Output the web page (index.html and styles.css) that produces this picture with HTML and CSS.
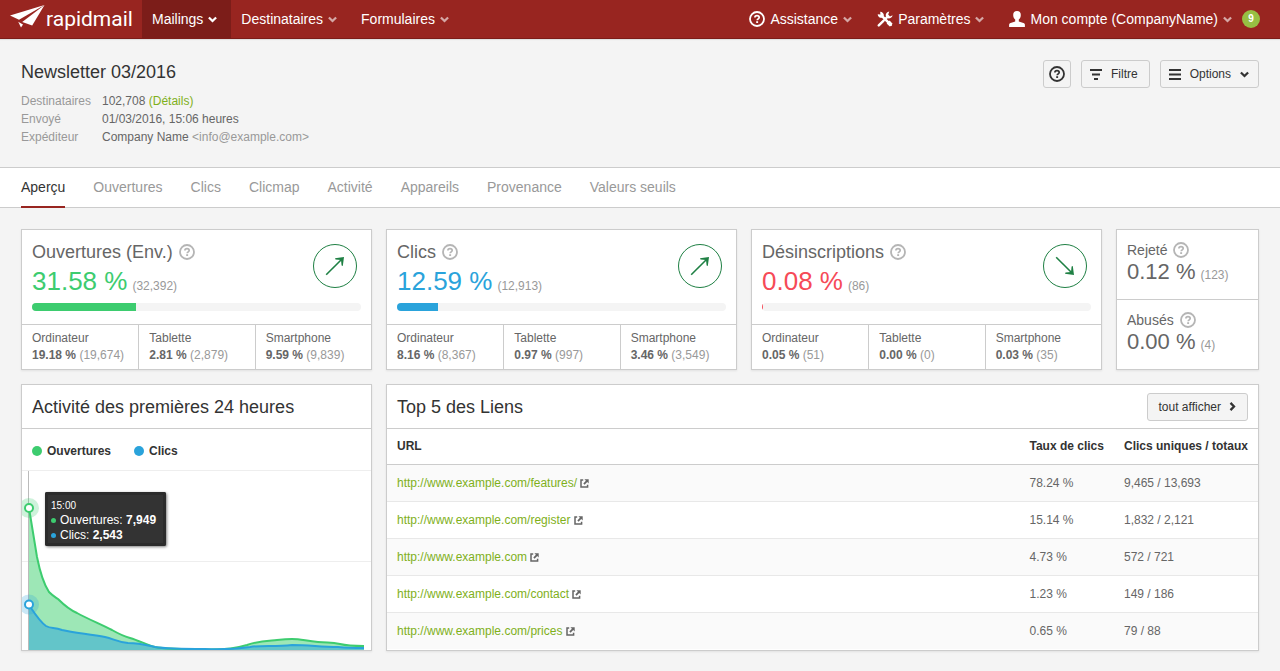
FILE: index.html
```
<!DOCTYPE html>
<html lang="fr">
<head>
    <meta charset="UTF-8">
    <meta name="viewport" content="width=device-width, initial-scale=1.0">
    <title>Newsletter 03/2016 - rapidmail</title>
    <link rel="stylesheet" href="styles.css">
</head>
<body>
<svg class="sprite" aria-hidden="true">
    <symbol id="chevron" viewBox="0 0 9 7">
        <path d="M.9 1.500 4.500 5 8.100 1.500" fill="none" stroke="currentColor" stroke-width="2.300"/>
    </symbol>
    <symbol id="help" viewBox="0 0 16 16">
        <circle cx="8" cy="8" r="7" fill="none" stroke="currentColor" stroke-width="1.8"/>
        <path d="M5.9 6.6C5.9 5.3 6.8 4.7 8 4.7s2.2.7 2.2 1.8c0 1.3-2 1.4-2 2.8" fill="none" stroke="currentColor" stroke-width="1.7"/>
        <rect x="7.2" y="10.2" width="1.9" height="1.8" fill="currentColor"/>
    </symbol>
    <symbol id="external" viewBox="0 0 9 9">
        <path d="M3.2 1H1v7h6.6V5.8" fill="none" stroke="currentColor" stroke-width="1.5"/>
        <path d="M4.4.3H8.7V4.6L7.2 3.1 4.6 5.7 3.3 4.4 5.9 1.8z" fill="currentColor"/>
    </symbol>
    <symbol id="arrow" viewBox="0 0 20 20">
        <path d="M1.2 18.8 17.500 2.500" fill="none" stroke="currentColor" stroke-width="1.600"/>
        <path d="M10 2.200 19 1 17.800 10 16.600 9.500 16 4 10.500 3.400z" fill="currentColor"/>
    </symbol>
</svg>

<header class="navbar">
    <a class="logo" href="#">
        <svg width="35" height="24" viewBox="0 0 35 24">
            <path d="M34.5 0 0 10.6l9 4.200z" fill="#fff"/>
            <path d="M34.5 0 12.2 17l10 3.600z" fill="#fff"/>
            <path d="M8.200 16.800 13 19.400 11 22.400z" fill="#fff"/>
        </svg>
        <span>rapidmail</span>
    </a>
    <nav class="nav-main">
        <a class="nav-item active" href="#">Mailings <svg class="chevron"><use href="#chevron"/></svg></a>
        <a class="nav-item" href="#">Destinataires <svg class="chevron"><use href="#chevron"/></svg></a>
        <a class="nav-item" href="#">Formulaires <svg class="chevron"><use href="#chevron"/></svg></a>
    </nav>
    <nav class="nav-user">
        <a class="nav-link" href="#">
            <svg class="nav-icon"><use href="#help"/></svg>
            Assistance <svg class="chevron"><use href="#chevron"/></svg>
        </a>
        <a class="nav-link" href="#">
            <svg class="nav-icon" viewBox="0 0 16 16">
                <path d="M4.8 4.8 13.8 13.8" stroke="#fff" stroke-width="2.6" stroke-linecap="round"/>
                <path d="M.7 3.2 3.4 3.5 3.2.7A3.6 3.6 0 0 1 6.8 4.8L4.9 6.8A3.6 3.6 0 0 1 .7 3.2z" fill="#fff"/>
                <path d="M15.6 4.2 13 5.4 11.2 3.6 12.3.6A3.8 3.8 0 0 0 8.8 5.2l2.1 2.1a3.8 3.8 0 0 0 4.7-3.1z" fill="#fff"/>
                <path d="M10.4 5.8 7.8 8.4M6.4 9.8 1.8 14.4" stroke="#fff" stroke-width="2.4" stroke-linecap="round"/>
                <path d="M9.6 12.6 12.6 9.6 15.6 12.8 12.8 15.6z" fill="#fff"/>
            </svg>
            Paramètres <svg class="chevron"><use href="#chevron"/></svg>
        </a>
        <a class="nav-link" href="#">
            <svg class="nav-icon" viewBox="0 0 16 16">
                <path d="M8 0c2.5 0 3.8 1.6 3.8 3.9 0 2-.8 3.7-2 4.7v2l4.6 1.5c1 .4 1.5 1 1.5 2V16H.1v-1.9c0-1 .5-1.6 1.5-2l4.6-1.5v-2c-1.200-1-2-2.700-2-4.700C4.200 1.600 5.500 0 8 0z" fill="#fff"/>
            </svg>
            Mon compte (CompanyName) <svg class="chevron"><use href="#chevron"/></svg>
        </a>
        <span class="badge">9</span>
    </nav>
</header>

<section class="page-header">
    <div>
        <h1>Newsletter 03/2016</h1>
        <dl class="meta">
            <dt>Destinataires</dt>
            <dd>102,708 <a href="#">(Détails)</a></dd>
            <dt>Envoyé</dt>
            <dd>01/03/2016, 15:06 heures</dd>
            <dt>Expéditeur</dt>
            <dd>Company Name <span class="muted">&lt;info@example.com&gt;</span></dd>
        </dl>
    </div>
    <div class="actions">
        <button class="btn btn-icon" aria-label="Aide"><svg width="16" height="16"><use href="#help"/></svg></button>
        <button class="btn">
            <svg width="12" height="12" viewBox="0 0 12 12"><path d="M0 2h12M2 6.500h8M4 11h4" stroke="currentColor" stroke-width="2"/></svg>
            Filtre
        </button>
        <button class="btn btn-options">
            <svg width="12" height="12" viewBox="0 0 12 12"><path d="M0 2h12M0 6.500h12M0 11h12" stroke="currentColor" stroke-width="2"/></svg>
            Options
            <svg class="chevron"><use href="#chevron"/></svg>
        </button>
    </div>
</section>

<nav class="tabs">
    <a class="active" href="#">Aperçu</a>
    <a href="#">Ouvertures</a>
    <a href="#">Clics</a>
    <a href="#">Clicmap</a>
    <a href="#">Activité</a>
    <a href="#">Appareils</a>
    <a href="#">Provenance</a>
    <a href="#">Valeurs seuils</a>
</nav>

<main class="grid">
    <section class="card">
        <div class="stat">
            <div class="stat-top">
                <div>
                    <h2>Ouvertures (Env.) <svg class="help"><use href="#help"/></svg></h2>
                    <p class="value green">31.58 % <small>(32,392)</small></p>
                </div>
                <span class="trend"><svg width="20" height="20"><use href="#arrow"/></svg></span>
            </div>
            <div class="bar"><div class="bar-fill green-bg" style="width: 31.58%"></div></div>
        </div>
        <div class="devices">
            <div>Ordinateur<br><b>19.18 %</b> <small>(19,674)</small></div>
            <div>Tablette<br><b>2.81 %</b> <small>(2,879)</small></div>
            <div>Smartphone<br><b>9.59 %</b> <small>(9,839)</small></div>
        </div>
    </section>

    <section class="card">
        <div class="stat">
            <div class="stat-top">
                <div>
                    <h2>Clics <svg class="help"><use href="#help"/></svg></h2>
                    <p class="value blue">12.59 % <small>(12,913)</small></p>
                </div>
                <span class="trend"><svg width="20" height="20"><use href="#arrow"/></svg></span>
            </div>
            <div class="bar"><div class="bar-fill blue-bg" style="width: 12.59%"></div></div>
        </div>
        <div class="devices">
            <div>Ordinateur<br><b>8.16 %</b> <small>(8,367)</small></div>
            <div>Tablette<br><b>0.97 %</b> <small>(997)</small></div>
            <div>Smartphone<br><b>3.46 %</b> <small>(3,549)</small></div>
        </div>
    </section>

    <section class="card">
        <div class="stat">
            <div class="stat-top">
                <div>
                    <h2>Désinscriptions <svg class="help"><use href="#help"/></svg></h2>
                    <p class="value red">0.08 % <small>(86)</small></p>
                </div>
                <span class="trend down"><svg width="20" height="20"><use href="#arrow"/></svg></span>
            </div>
            <div class="bar"><div class="bar-fill red-bg" style="width: 0.08%"></div></div>
        </div>
        <div class="devices">
            <div>Ordinateur<br><b>0.05 %</b> <small>(51)</small></div>
            <div>Tablette<br><b>0.00 %</b> <small>(0)</small></div>
            <div>Smartphone<br><b>0.03 %</b> <small>(35)</small></div>
        </div>
    </section>

    <section class="card side">
        <div class="side-stat">
            <h3>Rejeté <svg class="help"><use href="#help"/></svg></h3>
            <p>0.12 % <small>(123)</small></p>
        </div>
        <div class="side-stat">
            <h3>Abusés <svg class="help"><use href="#help"/></svg></h3>
            <p>0.00 % <small>(4)</small></p>
        </div>
    </section>

    <section class="card">
        <div class="card-header"><h2>Activité des premières 24 heures</h2></div>
        <div class="legend">
            <span><i class="dot green-bg"></i>Ouvertures</span>
            <span><i class="dot blue-bg"></i>Clics</span>
        </div>
        <div class="chart">
            <svg viewBox="0 0 349 179" preserveAspectRatio="none">
                <path d="M0 90.500H349" stroke="#eee"/>
                <path d="M6.500 0V179" stroke="#bbb"/>
                <path d="M7 37C10 55 13 73 15 86 18 101 21 112 27 121 31 125 33 126 36 128 42 134 48 139 55 142 64 147 78 153 90 159 97 163 101 165 108 167 118 170 125 174 133 176 142 178 155 178 183 178.500 202 179 212 178 225 174 236 170 244 170 255 169 264 168 266 168 270 168 279 168 284 170 296 171 307 172 309 171 318 173 326 175 333 175 342 175V179H7z" fill="#3c6" fill-opacity=".48"/>
                <path d="M7 134C13 143 18 151 24 155 29 158 32 156 40 159 52 162 68 163 83 166 92 168 95 171 106 172 118 172 124 174 133 176 145 178 160 178 183 178 205 179 214 178 228 176 240 174 252 176 270 174 288 174 298 176 316 176 326 177 334 177 342 177V179H7z" fill="#2aa3db" fill-opacity=".5"/>
                <path d="M7 37C10 55 13 73 15 86 18 101 21 112 27 121 31 125 33 126 36 128 42 134 48 139 55 142 64 147 78 153 90 159 97 163 101 165 108 167 118 170 125 174 133 176 142 178 155 178 183 178.500 202 179 212 178 225 174 236 170 244 170 255 169 264 168 266 168 270 168 279 168 284 170 296 171 307 172 309 171 318 173 326 175 333 175 342 175" fill="none" stroke="#3dcc6f" stroke-width="2"/>
                <path d="M7 134C13 143 18 151 24 155 29 158 32 156 40 159 52 162 68 163 83 166 92 168 95 171 106 172 118 172 124 174 133 176 145 178 160 178 183 178 205 179 214 178 228 176 240 174 252 176 270 174 288 174 298 176 316 176 326 177 334 177 342 177" fill="none" stroke="#2aa3db" stroke-width="2"/>
                <circle cx="7" cy="37" r="10" fill="#3dcc6f" fill-opacity=".25"/>
                <circle cx="7" cy="37" r="4" fill="#fff" stroke="#3dcc6f" stroke-width="2"/>
                <circle cx="7" cy="133.500" r="10" fill="#2aa3db" fill-opacity=".25"/>
                <circle cx="7" cy="133.500" r="4" fill="#fff" stroke="#2aa3db" stroke-width="2"/>
            </svg>
            <div class="tooltip">
                <div class="time">15:00</div>
                <div><i class="dot green-bg"></i>Ouvertures: <b>7,949</b></div>
                <div><i class="dot blue-bg"></i>Clics: <b>2,543</b></div>
            </div>
        </div>
    </section>

    <section class="card links">
        <div class="card-header">
            <h2>Top 5 des Liens</h2>
            <button class="btn btn-all">tout afficher <svg class="chevron right"><use href="#chevron"/></svg></button>
        </div>
        <table>
            <thead>
                <tr><th class="url">URL</th><th>Taux de clics</th><th>Clics uniques / totaux</th></tr>
            </thead>
            <tbody>
                <tr><td><a href="#">http://www.example.com/features/</a> <svg class="external"><use href="#external"/></svg></td><td>78.24 %</td><td>9,465 / 13,693</td></tr>
                <tr><td><a href="#">http://www.example.com/register</a> <svg class="external"><use href="#external"/></svg></td><td>15.14 %</td><td>1,832 / 2,121</td></tr>
                <tr><td><a href="#">http://www.example.com</a> <svg class="external"><use href="#external"/></svg></td><td>4.73 %</td><td>572 / 721</td></tr>
                <tr><td><a href="#">http://www.example.com/contact</a> <svg class="external"><use href="#external"/></svg></td><td>1.23 %</td><td>149 / 186</td></tr>
                <tr><td><a href="#">http://www.example.com/prices</a> <svg class="external"><use href="#external"/></svg></td><td>0.65 %</td><td>79 / 88</td></tr>
            </tbody>
        </table>
    </section>
</main>
</body>
</html>
```
FILE: styles.css
```
* {
    box-sizing: border-box;
}
body {
    margin: 0;
    background-color: #f4f4f4;
    color: #666;
    font-family: "Liberation Sans", Arial, sans-serif;
    font-size: 12px;
    line-height: 18px;
}
h1, h2, h3, p, dl, dd {
    margin: 0;
    font-weight: normal;
}
a {
    color: #7fb01b;
    text-decoration: none;
}
small {
    font-size: 12px;
    color: #999;
}
svg {
    flex-shrink: 0;
}
.sprite {
    display: none;
}
.muted {
    color: #999;
}
.chevron {
    width: 9px;
    height: 7px;
}
.green { color: #3dcc6f; }
.blue { color: #2aa3db; }
.red { color: #f64a57; }
.green-bg { background-color: #3dcc6f; }
.blue-bg { background-color: #2aa3db; }
.red-bg { background-color: #f64a57; }

/* top bar */
.navbar {
    display: flex;
    height: 39px;
    background-color: #982520;
    border-bottom: 1px solid #7c1c18;
    font-size: 14px;
    box-shadow: 0 1px 1px rgba(0, 0, 0, 0.08);
}
.navbar a {
    display: flex;
    align-items: center;
    color: #fff;
    white-space: nowrap;
}
.navbar .logo {
    gap: 1px;
    width: 142px;
    padding-left: 10px;
    font-family: Roboto, sans-serif;
    font-size: 21px;
    font-weight: 400;
}
.logo svg {
    margin-bottom: 4px;
}
.nav-main {
    display: flex;
    flex: 1;
}
.nav-item {
    gap: 5px;
    padding: 0 14px 0 10px;
}
.nav-item.active {
    background-color: #7c1d19;
}
.navbar .chevron {
    opacity: 0.6;
}
.navbar .active .chevron {
    opacity: 1;
}
.nav-user {
    display: flex;
    align-items: center;
    gap: 25px;
    padding-right: 20px;
}
.nav-link {
    gap: 5px;
}
.nav-icon {
    width: 16px;
    height: 16px;
}
.badge {
    width: 18px;
    margin-left: -15px;
    border-radius: 9px;
    background-color: #97bf43;
    color: #fff;
    font-size: 10px;
    font-weight: bold;
    text-align: center;
}

/* page header */
.page-header {
    display: flex;
    justify-content: space-between;
    padding: 21px;
}
h1 {
    margin-top: 1px;
    color: #333;
    font-size: 18px;
    line-height: 22px;
}
.meta {
    display: grid;
    grid-template-columns: 73px 1fr;
    column-gap: 8px;
    margin-top: 9px;
}
.meta dt {
    color: #999;
}
.actions {
    display: flex;
    align-items: flex-start;
    gap: 10px;
}
.btn {
    display: flex;
    align-items: center;
    gap: 9px;
    height: 28px;
    padding: 0 11px 0 8px;
    border: 1px solid #ccc;
    border-radius: 3px;
    background-color: #f4f4f4;
    color: #333;
    font-family: inherit;
    font-size: 12px;
    cursor: pointer;
}
.btn:hover {
    background-color: #fff;
}
.btn-icon {
    padding: 0 5px;
}
.btn-options {
    padding-right: 9px;
}

/* tabs */
.tabs {
    display: flex;
    gap: 28px;
    padding: 0 21px;
    border-top: 1px solid #ccc;
    border-bottom: 1px solid #ccc;
    background-color: #fff;
    font-size: 14px;
}
.tabs a {
    margin-bottom: -1px;
    padding: 10px 0;
    border-bottom: 2px solid transparent;
    color: #999;
}
.tabs .active {
    border-color: #982520;
    color: #333;
}

/* cards */
.grid {
    display: grid;
    grid-template-columns: 1fr 1fr 1fr 143px;
    gap: 14px;
    padding: 21px;
}
.card {
    border: 1px solid #ccc;
    background-color: #fff;
    box-shadow: 0 1px 2px rgba(0, 0, 0, 0.08);
}
.stat {
    padding: 10px 10px 13px;
}
.stat-top {
    display: flex;
    justify-content: space-between;
}
h2 {
    font-size: 18px;
    line-height: 24px;
}
.stat h2, h3 {
    display: flex;
    align-items: center;
    gap: 6px;
}
.help {
    width: 16px;
    height: 16px;
    color: #b5b5b5;
}
.value, .side-stat p {
    display: flex;
    align-items: baseline;
    gap: 5px;
}
.value {
    font-size: 26px;
    line-height: 34px;
}
.value small, .side-stat small {
    line-height: 14px;
}
.trend {
    display: flex;
    align-items: center;
    justify-content: center;
    width: 44px;
    height: 44px;
    margin: 4px 4px 0 0;
    border: 1px solid #1f8044;
    border-radius: 50%;
    color: #1f8044;
}
.trend.down {
    transform: rotate(90deg);
}
.bar {
    height: 8px;
    margin-top: 5px;
    border-radius: 4px;
    background-color: #f4f4f4;
    overflow: hidden;
}
.bar-fill {
    min-width: 1px;
    height: 8px;
}
.devices {
    display: grid;
    grid-template-columns: 1fr 1fr 1fr;
    border-top: 1px solid #ccc;
    line-height: 17px;
}
.devices div {
    padding: 5px 0 5px 10px;
}
.devices div + div {
    border-left: 1px solid #ccc;
}
.side {
    display: flex;
    flex-direction: column;
}
.side-stat {
    flex: 1;
    padding: 10px 10px 0;
}
.side-stat + .side-stat {
    border-top: 1px solid #ccc;
}
.side-stat h3 {
    font-size: 14px;
    line-height: 20px;
}
.side-stat p {
    font-size: 22px;
    line-height: 24px;
}
.card-header {
    display: flex;
    align-items: center;
    justify-content: space-between;
    height: 44px;
    padding: 0 10px;
    border-bottom: 1px solid #ccc;
    color: #333;
}

/* activity chart */
.legend {
    display: flex;
    gap: 23px;
    padding: 13px 10px 10px;
    border-bottom: 1px solid #eee;
    color: #333;
    font-weight: bold;
}
.legend span {
    display: flex;
    align-items: center;
    gap: 5px;
}
.dot {
    width: 10px;
    height: 10px;
    border-radius: 50%;
}
.chart {
    position: relative;
}
.chart svg {
    display: block;
    width: 100%;
    height: 179px;
}
.tooltip {
    position: absolute;
    top: 21px;
    left: 23px;
    padding: 6px 10px 3px 6px;
    border-radius: 2px;
    background-color: #333;
    box-shadow: inset 0 0 0 3px #2b2b2b, 1px 1px 3px rgba(0, 0, 0, 0.5);
    color: #fff;
    line-height: 15px;
}
.tooltip .time {
    font-size: 10px;
}
.tooltip .dot {
    display: inline-block;
    width: 5px;
    height: 5px;
    margin-right: 4px;
    vertical-align: 1px;
}

/* links table */
.links {
    grid-column: span 3;
}
.btn-all {
    gap: 7px;
    padding: 0 10px 0 11px;
}
.right {
    transform: rotate(-90deg);
}
table {
    width: 100%;
    border-collapse: collapse;
}
th, td {
    height: 37px;
    padding: 0 10px;
    border-bottom: 1px solid #e8e8e8;
    text-align: left;
    white-space: nowrap;
}
th {
    height: 35px;
    border-color: #ccc;
    color: #333;
}
.url {
    width: 100%;
}
tbody tr:nth-child(odd) {
    background-color: #fafafa;
}
tbody tr:last-child td {
    border-bottom: none;
}
.external {
    width: 9px;
    height: 9px;
    vertical-align: -1px;
}
```
